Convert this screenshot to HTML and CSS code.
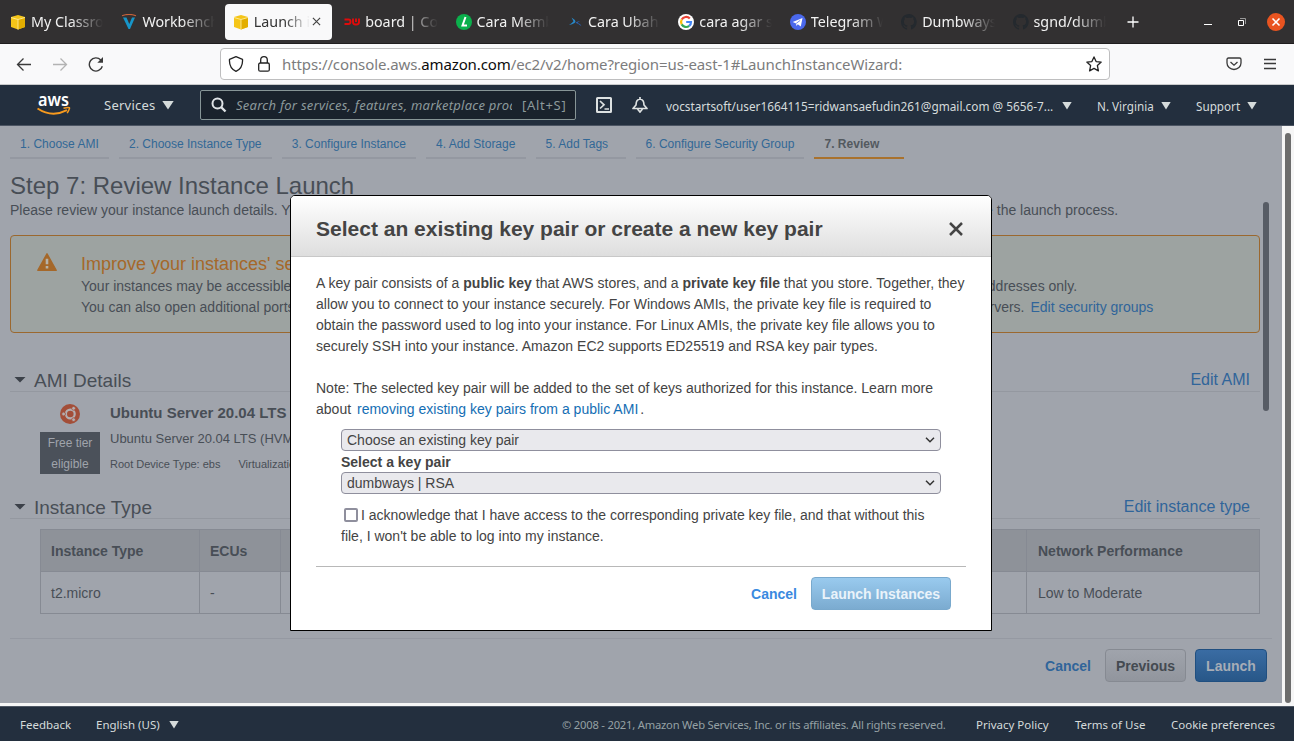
FILE: index.html
```html
<!DOCTYPE html>
<html lang="en">
<head>
<meta charset="utf-8">
<title>Launch instance wizard</title>
<link rel="stylesheet" href="styles.css">
</head>
<body>
<div class="window">
  <header class="tabbar">
    <div class="tab">
      <svg class="fav" viewBox="0 0 16 16"><path fill="#f5c518" d="M8 1l7 2v10l-7 2.500-7-2.500V3z"/><path fill="#e3ae00" d="M8 5.500l7-2v9.500l-7 2.500z"/><path d="M1 3.500l7 2 7-2M8 5.500v10" stroke="#fff0a8" stroke-width=".8" fill="none"/></svg>
      <span class="tab-title">My Classroom</span>
    </div>
    <div class="tab">
      <svg class="fav" viewBox="0 0 16 16"><path d="M2 3.500h3.500L8.300 10l2.700-6.500h3L9 15H7.500z" fill="#1795c8"/><path d="M1 1.700q7-2.500 14 0" stroke="#c5623b" stroke-width="1.200" fill="none"/></svg>
      <span class="tab-title">Workbench</span>
    </div>
    <div class="tab active">
      <svg class="fav" viewBox="0 0 16 16"><path fill="#f5c518" d="M8 1l7 2v10l-7 2.500-7-2.500V3z"/><path fill="#e3ae00" d="M8 5.500l7-2v9.500l-7 2.500z"/><path d="M1 3.500l7 2 7-2M8 5.500v10" stroke="#fff0a8" stroke-width=".8" fill="none"/></svg>
      <span class="tab-title">Launch inst</span>
      <svg class="tab-close" viewBox="0 0 10 10"><path d="M1 1l8 8M9 1l-8 8" stroke="#444" stroke-width="1.300"/></svg>
    </div>
    <div class="tab">
      <svg class="fav" viewBox="0 0 16 16"><path d="M.5 5.500h4q2 0 2 2.200t-2 2.300H.5M9 4.500V8q0 2.500 2.500 2.500h1Q15 10.500 15 8V4.500M12 4.500v3.500" stroke="#e00b0b" stroke-width="1.900" fill="none"/></svg>
      <span class="tab-title">board | Cohort</span>
    </div>
    <div class="tab">
      <svg class="fav" viewBox="0 0 16 16"><circle cx="8" cy="8" r="8" fill="#0bb04c"/><path d="M9.500 3L6.500 11.500H11" stroke="#fff" stroke-width="2" fill="none"/></svg>
      <span class="tab-title">Cara Membuat</span>
    </div>
    <div class="tab">
      <svg class="fav" viewBox="0 0 16 16"><path d="M4.500 3.500q3.500 2 4 4.200L7.500 9q-2 1.700-5.500 2 3-1.500 4.500-3.700z" fill="#2789c9"/><path d="M8.500 8.800q2-2 4.500-1.500-2 .7-2.500 1.700 3 .5 4 3.200Q12 10 8.500 8.800z" fill="#2a63b5"/></svg>
      <span class="tab-title">Cara Ubah Na</span>
    </div>
    <div class="tab">
      <svg class="fav" viewBox="0 0 16 16"><circle cx="8" cy="8" r="8" fill="#fff"/><g fill="none" stroke-width="2.200"><path d="M11.800 4.600A5 5 0 0 0 3.700 5.600" stroke="#ea4335"/><path d="M3.700 5.600a5 5 0 0 0 0 4.800" stroke="#fbbc05"/><path d="M3.700 10.400a5 5 0 0 0 7.500 1.500" stroke="#34a853"/><path d="M11.200 11.900A5 5 0 0 0 13 8H8.200" stroke="#4285f4"/></g></svg>
      <span class="tab-title">cara agar ssh</span>
    </div>
    <div class="tab">
      <svg class="fav" viewBox="0 0 16 16"><circle cx="8" cy="8" r="8" fill="#4a68ec"/><path d="M2.700 8l9.800-4-1.700 8.500-3-2.200L6.400 12l-.3-2.500z" fill="#fff"/><path d="M6.200 9.400l4-3" stroke="#4a68ec" stroke-width=".8"/></svg>
      <span class="tab-title">Telegram Web</span>
    </div>
    <div class="tab">
      <svg class="fav" viewBox="0 0 16 16"><path fill="#24292e" d="M8 0C3.580 0 0 3.580 0 8c0 3.540 2.290 6.530 5.470 7.590.4.070.55-.17.55-.38v-1.490c-2.230.48-2.690-1.070-2.690-1.070-.36-.92-.89-1.170-.89-1.170-.73-.5.050-.49.050-.49.8.06 1.230.83 1.230.83.71 1.220 1.870.87 2.330.66.070-.52.280-.87.510-1.070-1.780-.2-3.640-.89-3.640-3.950 0-.87.310-1.590.82-2.150-.08-.2-.36-1.020.08-2.120 0 0 .67-.21 2.200.82a7.700 7.700 0 0 1 4 0c1.530-1.040 2.200-.82 2.200-.82.44 1.100.16 1.920.08 2.120.51.560.82 1.270.82 2.150 0 3.070-1.870 3.750-3.650 3.950.29.250.54.730.54 1.480v2.200c0 .21.150.46.550.38A8 8 0 0 0 8 0z"/></svg>
      <span class="tab-title">Dumbways.id</span>
    </div>
    <div class="tab">
      <svg class="fav" viewBox="0 0 16 16"><path fill="#24292e" d="M8 0C3.580 0 0 3.580 0 8c0 3.540 2.290 6.530 5.470 7.590.4.070.55-.17.55-.38v-1.490c-2.230.48-2.690-1.070-2.690-1.070-.36-.92-.89-1.170-.89-1.170-.73-.5.050-.49.050-.49.8.06 1.230.83 1.230.83.71 1.220 1.870.87 2.330.66.070-.52.280-.87.510-1.070-1.780-.2-3.640-.89-3.640-3.950 0-.87.310-1.590.82-2.150-.08-.2-.36-1.020.08-2.120 0 0 .67-.21 2.200.82a7.700 7.700 0 0 1 4 0c1.530-1.040 2.200-.82 2.200-.82.44 1.100.16 1.920.08 2.120.51.560.82 1.270.82 2.150 0 3.070-1.870 3.750-3.650 3.950.29.250.54.730.54 1.480v2.200c0 .21.150.46.550.38A8 8 0 0 0 8 0z"/></svg>
      <span class="tab-title">sgnd/dumbw</span>
    </div>
    <svg class="new-tab" viewBox="0 0 12 12"><path d="M6 .5v11M.5 6h11" stroke="#fff" stroke-width="1.300"/></svg>
    <div class="win-buttons">
      <svg width="8" height="10" viewBox="0 0 8 10"><path d="M0 7.500h8" stroke="#fff"/></svg>
      <svg width="8" height="8" viewBox="0 0 8 8"><path d="M.5 2.500h5v5h-5z" stroke="#fff" fill="none"/><path d="M2 .5h5.500V6" stroke="#999" fill="none"/></svg>
      <svg width="18" height="18" viewBox="0 0 18 18"><circle cx="9" cy="9" r="9" fill="#e95420"/><path d="M5.500 5.500l7 7M12.500 5.500l-7 7" stroke="#fff" stroke-width="1.600"/></svg>
    </div>
  </header>

  <div class="toolbar">
    <div class="nav-icons">
      <svg viewBox="0 0 16 16"><path d="M15 8.500H1.500M7.500 2.500l-6 6 6 6" stroke="#3a3a3a" stroke-width="1.300" fill="none"/></svg>
      <svg viewBox="0 0 16 16"><path d="M1 8.500h13.500M8.500 2.500l6 6-6 6" stroke="#b3b3b3" stroke-width="1.300" fill="none"/></svg>
      <svg viewBox="0 0 16 16"><path d="M14.300 10.200A6.600 6.600 0 1 1 12.800 4" stroke="#3a3a3a" stroke-width="1.400" fill="none"/><path d="M15 1v5.700H9.300z" fill="#3a3a3a"/></svg>
    </div>
    <div class="urlbar">
      <svg viewBox="0 0 16 16"><path d="M8 .7l6.500 2.600c.4 5.700-1.500 9.700-6.500 12C3 13 1.100 9 1.500 3.300z" stroke="#222" stroke-width="1.300" stroke-linejoin="round" fill="none"/></svg>
      <svg viewBox="0 0 16 16"><rect x="2.700" y="7" width="10.600" height="8.200" rx="1.500" stroke="#222" stroke-width="1.300" fill="none"/><path d="M4.700 7V4a3.300 3.300 0 0 1 6.600 0v3" stroke="#222" stroke-width="1.300" fill="none"/></svg>
      <span class="url">https://console.aws.<b>amazon.com</b>/ec2/v2/home?region=us-east-1#LaunchInstanceWizard:</span>
      <svg class="star" viewBox="0 0 16 16"><path d="M8 .9l2.100 4.700 5.100.5-3.800 3.500 1 5.300L8 12.400l-4.400 2.500 1-5.300L.8 6.100l5.100-.5z" stroke="#222" stroke-width="1.300" stroke-linejoin="round" fill="none"/></svg>
    </div>
    <div class="tool-icons">
      <svg viewBox="0 0 16 16"><path d="M2.500 2h11q1.500 0 1.500 1.500V7A7 6.500 0 0 1 1 7V3.500Q1 2 2.500 2z" stroke="#3a3a3a" stroke-width="1.300" fill="none"/><path d="M4.500 6L8 9.200 11.500 6" stroke="#3a3a3a" stroke-width="1.300" fill="none"/></svg>
      <svg viewBox="0 0 16 16"><path d="M2 3.500h12M2 7.500h12M2 12.500h12" stroke="#3a3a3a" stroke-width="1.400"/></svg>
    </div>
  </div>

  <nav class="aws-nav">
    <svg class="logo" width="34" height="24" viewBox="0 0 34 24"><text x="1" y="12.500" textLength="31" lengthAdjust="spacingAndGlyphs" class="logo-text">aws</text><path d="M.5 15.500Q15 25 30 17.200" stroke="#f79a1e" stroke-width="2" fill="none"/><path d="M26.500 15.200q6.500-1.700 6 .2t-2.300 4.800" stroke="#f79a1e" stroke-width="1.500" fill="none"/></svg>
    <span class="services">Services</span><i class="tri"></i>
    <div class="search">
      <svg width="16" height="16" viewBox="0 0 16 16"><circle cx="6.500" cy="6.500" r="5" stroke="#dfe3e6" stroke-width="2" fill="none"/><path d="M10 10l4.500 4.500" stroke="#dfe3e6" stroke-width="2.400"/></svg>
      <span class="placeholder">Search for services, features, marketplace products</span>
      <span class="hotkey">[Alt+S]</span>
    </div>
    <svg class="shell" width="16" height="16" viewBox="0 0 16 16"><rect x="1" y="1" width="14" height="14" rx=".5" stroke="#dde1e1" stroke-width="2" fill="none"/><path d="M4 4l4 3.800L4 11.500M8.500 12H13" stroke="#dde1e1" stroke-width="1.700" fill="none"/></svg>
    <svg class="bell" width="16" height="16" viewBox="0 0 16 16"><path d="M8 0v2M1 11.500h14L12 8q0-5.500-4-6-4 .5-4 6z" stroke="#dde1e1" stroke-width="1.700" stroke-linejoin="round" fill="none"/><path d="M5.500 12l2.500 3 2.500-3" stroke="#dde1e1" stroke-width="1.700" fill="none"/></svg>
    <span class="user">vocstartsoft/user1664115=ridwansaefudin261@gmail.com @ 5656-7...</span><i class="tri small"></i>
    <span class="region">N. Virginia</span><i class="tri small"></i>
    <span class="support">Support</span><i class="tri small"></i>
  </nav>

  <main class="page">
    <div class="content">
      <div class="steps">
        <span class="step">1. Choose AMI</span><span class="step">2. Choose Instance Type</span><span class="step">3. Configure Instance</span><span class="step">4. Add Storage</span><span class="step">5. Add Tags</span><span class="step">6. Configure Security Group</span><span class="step current">7. Review</span>
      </div>
      <h1>Step 7: Review Instance Launch</h1>
      <p class="intro">Please review your instance launch details. You can go back to edit changes for each section. Click <b>Launch</b> to assign a key pair to your instance and complete the launch process.</p>
      <div class="scroll">
        <section class="alert">
          <svg width="20" height="18" viewBox="0 0 20 18"><path d="M10 .8L19.200 17.300H.8z" fill="#a5682a" stroke="#a5682a" stroke-width="1.400" stroke-linejoin="round"/><path d="M10 5.800v5.500M10 13v2.500" stroke="#b6b3aa" stroke-width="2.600"/></svg>
          <div class="alert-text">
            <h2>Improve your instances' security. Your security group, launch-wizard-1, is open to the world.</h2>
            <p>Your instances may be accessible from any IP address. We recommend that you update your security group rules to allow access from known IP addresses only.</p>
            <p>You can also open additional ports in your security group to facilitate access to the application or service you're running, e.g., HTTP (80) for web servers. <a class="edit-groups">Edit security groups</a></p>
          </div>
        </section>
        <div class="section-head ami-head"><i class="caret"></i><h3>AMI Details</h3><a>Edit AMI</a></div>
        <div class="ami">
          <div class="ami-badge">
            <svg width="20" height="20" viewBox="0 0 20 20"><circle cx="10" cy="10" r="10" fill="#a34e38"/><circle cx="10.300" cy="10" r="4.400" stroke="#b3aeb0" stroke-width="2.200" fill="none"/><g fill="#b3aeb0" stroke="#a34e38" stroke-width=".8"><circle cx="3.600" cy="10" r="1.900"/><circle cx="13.600" cy="4.300" r="1.900"/><circle cx="13.600" cy="15.700" r="1.900"/></g></svg>
            <span class="tier">Free tier<br>eligible</span>
          </div>
          <div class="ami-text">
            <b>Ubuntu Server 20.04 LTS (HVM), SSD Volume Type</b>
            <span class="ami-desc">Ubuntu Server 20.04 LTS (HVM), EBS General Purpose (SSD) Volume Type.</span>
            <span class="ami-meta"><span>Root Device Type: ebs</span><span>Virtualization type: hvm</span></span>
          </div>
        </div>
        <div class="section-head"><i class="caret"></i><h3>Instance Type</h3><a>Edit instance type</a></div>
        <div class="table">
          <div class="row head"><span>Instance Type</span><span>ECUs</span><span>vCPUs</span><span>Memory (GiB)</span><span>Instance Storage (GB)</span><span>EBS-Optimized Available</span><span>Network Performance</span></div>
          <div class="row"><span>t2.micro</span><span>-</span><span>1</span><span>1</span><span>EBS only</span><span>-</span><span>Low to Moderate</span></div>
        </div>
        <i class="inner-thumb"></i>
      </div>
      <div class="actions"><a>Cancel</a><button class="btn previous">Previous</button><button class="btn launch">Launch</button></div>
    </div>
    <div class="scrollbar"><i></i></div>

    <div class="modal">
      <div class="modal-head"><h2>Select an existing key pair or create a new key pair</h2>
        <svg width="14" height="14" viewBox="0 0 14 14"><path d="M1 1l12 12M13 1L1 13" stroke="#444" stroke-width="2.500"/></svg></div>
      <div class="modal-body">
        <p>A key pair consists of a <b>public key</b> that AWS stores, and a <b>private key file</b> that you store. Together, they<br>allow you to connect to your instance securely. For Windows AMIs, the private key file is required to<br>obtain the password used to log into your instance. For Linux AMIs, the private key file allows you to<br>securely SSH into your instance. Amazon EC2 supports ED25519 and RSA key pair types.</p>
        <p>Note: The selected key pair will be added to the set of keys authorized for this instance. Learn more<br>about <a class="remove-link">removing existing key pairs from a public AMI</a><span class="dot">.</span></p>
        <div class="form">
          <div class="select"><span>Choose an existing key pair</span><svg width="10" height="6" viewBox="0 0 10 6"><path d="M1 .8l4 4 4-4" stroke="#333" stroke-width="1.500" fill="none"/></svg></div>
          <label>Select a key pair</label>
          <div class="select"><span>dumbways | RSA</span><svg width="10" height="6" viewBox="0 0 10 6"><path d="M1 .8l4 4 4-4" stroke="#333" stroke-width="1.500" fill="none"/></svg></div>
          <p class="ack"><i class="check"></i>I acknowledge that I have access to the corresponding private key file, and that without this<br>file, I won't be able to log into my instance.</p>
        </div>
        <div class="modal-actions"><a>Cancel</a><button class="btn confirm">Launch Instances</button></div>
      </div>
    </div>
  </main>

  <footer class="footer">
    <span class="f-feedback">Feedback</span><span class="f-lang">English (US)</span><i class="tri small"></i>
    <span class="f-copy">© 2008 - 2021, Amazon Web Services, Inc. or its affiliates. All rights reserved.</span>
    <span class="f-privacy">Privacy Policy</span><span class="f-terms">Terms of Use</span><span class="f-cookie">Cookie preferences</span>
  </footer>
</div>
</body>
</html>
```
FILE: styles.css
```css
* { box-sizing: border-box; }
body { margin: 0; overflow: hidden; }
h1, h2, h3, p { margin: 0; font-weight: normal; }
svg { display: block; flex: none; }
i { display: block; flex: none; }
.window { width: 1294px; height: 741px; display: flex; flex-direction: column; font-family: "Noto Sans", sans-serif; white-space: nowrap; }

/* Browser tabs */
.tabbar { height: 44px; flex: none; display: flex; align-items: center; background: #323031; border-bottom: 1px solid #1f1d1e; }
.tab { width: 107.400px; height: 36px; margin: 0 2px; padding: 0 6px 0 8px; flex: none; display: flex; align-items: center; gap: 5px; color: #f2f2f2; font-size: 14.300px; border-radius: 4px; }
.tab.active { background: #f9f9fa; color: #333; }
.fav { width: 16px; height: 16px; }
.tab-title { flex: 1; min-width: 0; overflow: hidden; line-height: 24px; -webkit-mask-image: linear-gradient(90deg, #000 55%, transparent 100%); mask-image: linear-gradient(90deg, #000 55%, transparent 100%); }
.tab-close { width: 9px; height: 9px; margin: 0 5px 0 -3px; }
.new-tab { width: 12px; height: 12px; margin-left: 13px; }
.win-buttons { margin-left: auto; padding-right: 9px; display: flex; align-items: center; gap: 26px; }
.win-buttons svg:last-child { margin-left: -5px; }

/* Browser toolbar */
.toolbar { height: 41px; flex: none; display: flex; align-items: center; background: #f9f9fa; border-bottom: 1px solid #c9cacb; }
.nav-icons { width: 220px; padding-left: 16px; display: flex; gap: 20px; }
.nav-icons svg, .urlbar svg, .tool-icons svg { width: 16px; height: 16px; }
.urlbar { width: 890px; height: 32px; padding: 0 7px; display: flex; align-items: center; gap: 12px; background: #fff; border: 1px solid #bebebf; border-radius: 4px; }
.url { margin-left: -2px; font-size: 15px; letter-spacing: -.105px; line-height: 22px; color: #7c7c7d; }
.url b { color: #0c0c0d; font-weight: normal; }
.star { margin-left: auto; }
.tool-icons { margin-left: auto; padding-right: 16px; display: flex; gap: 20px; }

/* Console navigation */
.aws-nav { height: 41px; flex: none; display: flex; align-items: center; background: #232f3e; border-bottom: 1px solid #4c5563; color: #d5dbdb; font-size: 13px; }
.logo { margin-left: 37px; }
.logo-text { font: 600 17px "Noto Sans", sans-serif; fill: #fff; }
.services { width: 58px; margin-left: 33px; letter-spacing: .25px; }
.tri { width: 12px; height: 9px; background: #d5dbdb; clip-path: polygon(0 0, 100% 0, 50% 100%); }
.tri.small { width: 10px; height: 8px; margin-top: 1px; }
.search { width: 376px; height: 30px; margin-left: 26px; padding: 0 8px 0 10px; display: flex; align-items: center; background: #1a222c; border: 1px solid #879596; border-radius: 2px; color: #8c999b; }
.placeholder { width: 276px; margin-left: 9px; overflow: hidden; font-style: italic; letter-spacing: .25px; }
.hotkey { margin-left: 10px; letter-spacing: .7px; }
.shell { margin-left: 20px; }
.bell { margin-left: 20px; }
.user { width: 396px; margin-left: 18px; padding-top: 1px; font-size: 11.800px; }
.region { width: 64px; margin-left: 25px; padding-top: 1px; font-size: 11.700px; }
.support { width: 51px; margin-left: 25px; padding-top: 1px; font-size: 11.700px; }

/* Wizard page, dimmed behind the dialog */
.page { position: relative; height: 580px; flex: none; display: flex; padding-bottom: 3px; background: #f6f6f6; font: 14px/21px "Liberation Sans", Arial, sans-serif; color: #484e56; }
.content { width: 1282px; padding-left: 10px; background: #a0a4ac; }
.content a { color: #30659a; }
.steps { display: flex; gap: 10px; }
.step { min-width: 90px; height: 33px; padding: 8px 10.100px 0; border-bottom: 2px solid #9498a1; color: #326896; font-size: 12px; line-height: 20px; }
.step.current { border-color: #a9722e; color: #53595f; font-weight: bold; }
h1 { margin-top: 13px; font-size: 24px; line-height: 28px; }
.intro { height: 21px; }
.scroll { position: relative; width: 1262px; height: 418px; padding-top: 14px; border-bottom: 1px solid #9599a2; }
.alert { width: 1250px; height: 98px; padding: 16px 26px; display: flex; gap: 24px; border: 1px solid #9b682f; border-radius: 4px; background: #9da3a1; }
.alert svg { margin-top: 1px; }
.alert h2 { font-size: 18px; line-height: 24px; color: #a5682a; }
.edit-groups { margin-left: 2px; }
.section-head { width: 1250px; height: 28px; padding: 0 10px 0 4px; display: flex; align-items: center; border-bottom: 1px solid #9498a0; }
.ami-head { margin-top: 31px; }
.caret { width: 12px; height: 6px; margin: 4px 8px 0 0; background: #3c4149; clip-path: polygon(0 0, 100% 0, 50% 100%); }
.section-head h3 { font-size: 19px; padding-top: 6px; }
.section-head a { margin-left: auto; padding-top: 4px; font-size: 16px; }
.ami { height: 99px; padding: 12px 0 0 30px; display: flex; gap: 10px; }
.ami-badge { width: 60px; display: flex; flex-direction: column; align-items: center; gap: 8px; }
.tier { width: 60px; height: 42px; padding-top: 1px; background: #4b515a; color: #a0a4ac; text-align: center; font-size: 12px; }
.ami-text { display: flex; flex-direction: column; margin-top: -1px; }
.ami-text b { font-size: 15px; line-height: 19px; }
.ami-desc { margin-top: 6px; font-size: 13px; }
.ami-meta { display: flex; gap: 18px; margin-top: 5px; font-size: 11px; }
.table { width: 1220px; margin: 10px 0 0 30px; border: 1px solid #868a93; border-bottom: 0; }
.row { height: 42px; display: grid; grid-template-columns: 159px 81px 100px 160px 245px 241px 1fr; border-bottom: 1px solid #868a93; }
.row span { padding: 11px 10px 0; border-right: 1px solid #868a93; line-height: 20px; overflow: hidden; }
.row span:last-child { border-right: 0; padding-left: 11px; }
.head { background: #8e9299; font-weight: bold; }
.inner-thumb { position: absolute; left: 1253px; top: -19px; width: 6px; height: 209px; border-radius: 3px; background: #575c65; }
.actions { width: 1257px; margin-top: 10px; display: flex; align-items: center; justify-content: flex-end; }
.actions a { margin-right: 14px; padding-top: 1px; font-weight: bold; }
.btn { height: 33px; padding: 0; border-radius: 4px; font: bold 14px/20px "Liberation Sans", Arial, sans-serif; }
.previous { width: 81px; margin-right: 9px; border: 1px solid #868a92; background: linear-gradient(#a0a4ac, #91959d); color: #444a51; }
.launch { width: 72px; border: 1px solid #204f80; background: linear-gradient(#3a6ca3, #285788); color: #a7adb6; }
.scrollbar { width: 12px; padding: 7px 3px 0; background: #f6f6f6; }
.scrollbar i { height: 570px; border-radius: 3px; background: #6d6d6d; }

/* Key pair dialog */
.modal { position: absolute; left: 290px; top: 69px; width: 702px; height: 436px; border: 1px solid #000; border-radius: 5px 5px 0 0; background: #fff; color: #444; overflow: hidden; }
.modal-head { height: 61px; padding: 5px 28px 0 25px; display: flex; align-items: center; justify-content: space-between; border-bottom: 1px solid #c8c8c8; background: linear-gradient(#fff, #dedede); }
.modal-head svg { margin-top: 1px; }
.modal-head h2 { font-size: 21px; font-weight: bold; }
.modal-body { padding: 16px 25px 0; }
.modal-body > p { margin-bottom: 21px; letter-spacing: .009px; }
.remove-link { color: #146eb4; margin-left: 2px; }
.dot { margin-left: 2px; }
.form { margin-top: -12px; padding-left: 25px; }
.select { width: 600px; height: 22px; padding: 0 5px; display: flex; align-items: center; justify-content: space-between; border: 1px solid #8f8f9d; border-radius: 4px; background: #e9e9ed; }
.form label { display: block; height: 21px; padding-top: 1px; line-height: 20px; font-weight: bold; }
.ack { margin-top: 11px; }
.check { display: inline-block; width: 14px; height: 14px; margin: 0 3px; vertical-align: -2px; border: 2px solid #8f8f9d; border-radius: 2px; background: #fff; }
.modal-actions { margin-top: 19px; padding: 10px 15px 0 0; display: flex; align-items: center; justify-content: flex-end; border-top: 1px solid #b8b8b8; }
.modal-actions a { margin-right: 14px; padding-top: 1px; color: #3a8ae0; font-weight: bold; }
.confirm { width: 140px; border: 1px solid #79a9cd; background: linear-gradient(#99caee, #7babd0); color: #eaf3fa; }

/* Console footer */
.footer { height: 35px; flex: none; display: flex; align-items: center; background: #232f3e; border-top: 1px solid #4f5865; color: #d5dbdb; font-size: 11.500px; }
.f-feedback { width: 76px; margin-left: 20px; }
.f-lang { width: 73px; }
.f-copy { margin-left: 383px; width: 414px; color: #95a1a4; font-size: 11.200px; letter-spacing: -.2px; }
.f-privacy { width: 99px; }
.f-terms { width: 96px; }
```
